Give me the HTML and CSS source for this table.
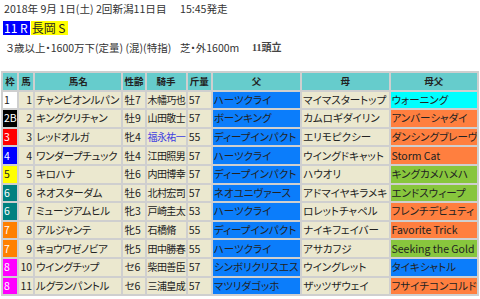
FILE: index.html
```html
<!DOCTYPE html>
<html lang="ja">
<head>
<meta charset="utf-8">
<link rel="stylesheet" href="styles.css">
</head>
<body>
<div class="page">
  <div class="line1"><span class="date">2018年 9月 1日(土) 2回新潟11日目</span><span class="time">15:45発走</span></div>
  <div class="line2"><span class="rno">11 R</span><span class="rname">長岡 S</span></div>
  <div class="line3"><span class="cond">３歳以上・1600万下(定量) (混)(特指)</span><span class="course">芝・外1600m</span><span class="heads">11頭立</span></div>
  <table class="tbl">
    <colgroup>
      <col class="c-waku"><col class="c-uma"><col class="c-name"><col class="c-sex"><col class="c-jockey"><col class="c-kin"><col class="c-sire"><col class="c-dam"><col class="c-bms">
    </colgroup>
    <thead>
      <tr><th>枠</th><th>馬</th><th>馬名</th><th>性齢</th><th>騎手</th><th>斤量</th><th>父</th><th>母</th><th>母父</th></tr>
    </thead>
    <tbody>
      <tr><td class="w1">1</td><td class="num">1</td><td class="nm">チャンピオンルパン</td><td>牡7</td><td class="jk">木幡巧也</td><td>57</td><td class="blue">ハーツクライ</td><td>マイマスタートップ</td><td class="cyan">ウォーニング</td></tr>
      <tr><td class="w2">2B</td><td class="num">2</td><td class="nm">キングクリチャン</td><td>牡9</td><td class="jk">山田敬士</td><td>57</td><td class="blue">ボーンキング</td><td>カムロギダイリン</td><td class="orange">アンバーシャダイ</td></tr>
      <tr><td class="w3">3</td><td class="num">3</td><td class="nm">レッドオルガ</td><td>牝4</td><td class="jk link">福永祐一</td><td>55</td><td class="blue">ディープインパクト</td><td>エリモピクシー</td><td class="orange">ダンシングブレーヴ</td></tr>
      <tr><td class="w4">4</td><td class="num">4</td><td class="nm">ワンダープチュック</td><td>牡4</td><td class="jk">江田照男</td><td>57</td><td class="blue">ハーツクライ</td><td>ウイングドキャット</td><td class="orange">Storm Cat</td></tr>
      <tr><td class="w5">5</td><td class="num">5</td><td class="nm">キロハナ</td><td>牡6</td><td class="jk">内田博幸</td><td>57</td><td class="blue">ディープインパクト</td><td>ハウオリ</td><td class="green">キングカメハメハ</td></tr>
      <tr><td class="w6">6</td><td class="num">6</td><td class="nm">ネオスターダム</td><td>牡6</td><td class="jk">北村宏司</td><td>57</td><td class="blue">ネオユニヴァース</td><td>アドマイヤキラメキ</td><td class="green">エンドスウィープ</td></tr>
      <tr><td class="w6">6</td><td class="num">7</td><td class="nm">ミュージアムヒル</td><td>牝3</td><td class="jk">戸崎圭太</td><td>53</td><td class="blue">ハーツクライ</td><td>ロレットチャペル</td><td class="orange">フレンチデピュティ</td></tr>
      <tr><td class="w7">7</td><td class="num">8</td><td class="nm">アルジャンテ</td><td>牝5</td><td class="jk">石橋脩</td><td>55</td><td class="blue">ディープインパクト</td><td>ナイキフェイバー</td><td class="orange">Favorite Trick</td></tr>
      <tr><td class="w7">7</td><td class="num">9</td><td class="nm">キョウワゼノビア</td><td>牝5</td><td class="jk">田中勝春</td><td>55</td><td class="blue">ハーツクライ</td><td>アサカフジ</td><td class="green">Seeking the Gold</td></tr>
      <tr><td class="w8">8</td><td class="num">10</td><td class="nm">ウイングチップ</td><td>セ6</td><td class="jk">柴田善臣</td><td>57</td><td class="blue">シンボリクリスエス</td><td>ウイングレット</td><td class="blue">タイキシャトル</td></tr>
      <tr><td class="w8">8</td><td class="num">11</td><td class="nm">ルグランパントル</td><td>セ6</td><td class="jk">三浦皇成</td><td>57</td><td class="blue">マツリダゴッホ</td><td>ザッツザウェイ</td><td class="orange">フサイチコンコルド</td></tr>
    </tbody>
  </table>
</div>
</body>
</html>
```
FILE: styles.css
```css
html, body {
  margin: 0;
  padding: 0;
  background: #ffffff;
}
body {
  font-family: "Noto Sans CJK JP", sans-serif;
  font-feature-settings: "palt" 1;
  color: #222;
}
.page {
  padding: 2px 0 0 1px;
}
.line1 {
  font-size: 10.6px;
  line-height: 14px;
  padding-left: 3px;
  color: #333;
  display: flex;
  font-feature-settings: normal;
  white-space: nowrap;
}
.line1 .date {
  flex: 0 0 176px;
}
.line2 {
  margin-top: 5px;
  padding-left: 2px;
  display: flex;
  font-size: 12px;
  line-height: 14px;
}
.rno {
  background: #0000ff;
  color: #ffffff;
  padding: 0 2px 0 1px;
  margin-right: 1px;
}
.rname {
  background: #ffff00;
  color: #222;
  padding: 0 3px 0 1px;
}
.line3 {
  margin-top: 6px;
  padding-left: 5px;
  font-size: 10.5px;
  line-height: 14px;
  color: #333;
  display: flex;
  white-space: nowrap;
}
.line3 .cond {
  flex: 0 0 174px;
}
.line3 .course {
  flex: 0 0 72px;
}
.line3 .heads {
  font-family: "Liberation Serif", "Noto Sans CJK JP", serif;
  font-weight: bold;
  color: #444;
  font-size: 10px;
}
.tbl {
  margin-top: 16px;
  border-collapse: separate;
  border-spacing: 2px;
  background: #cfcfcf;
  table-layout: fixed;
  width: 478px;
  font-size: 10.5px;
}
.c-waku { width: 14px; }
.c-uma { width: 14px; }
.c-name { width: 86px; }
.c-sex { width: 21px; }
.c-jockey { width: 39px; }
.c-kin { width: 23px; }
.c-sire { width: 87px; }
.c-dam { width: 86px; }
.c-bms { width: 86px; }
.tbl th, .tbl td {
  padding: 0 1px;
  height: 16.6px;
  line-height: 14px;
  white-space: nowrap;
  overflow: hidden;
  text-align: left;
  box-sizing: border-box;
}
.tbl th {
  background: #66cccc;
  font-size: 9.5px;
  font-weight: bold;
  text-align: center;
  color: #222;
}
.tbl td {
  background: #ebe8cf;
}
.tbl td.num {
  text-align: right;
}
.tbl td.nm {
  letter-spacing: -0.3px;
}
.tbl td.jk {
  font-size: 10px;
  letter-spacing: -0.6px;
}
.tbl td.link {
  color: #3f3fe0;
}
.tbl td.blue { background: #0b7dfb; }
.tbl td.cyan { background: #00ffff; }
.tbl td.orange { background: #ff7f3f; }
.tbl td.green { background: #88c63d; }
.tbl td.w1 { background: #ffffff; color: #222; }
.tbl td.w2 { background: #000000; color: #ffffff; }
.tbl td.w3 { background: #ff0000; color: #ffffff; }
.tbl td.w4 { background: #0000ff; color: #ffffff; }
.tbl td.w5 { background: #ffff00; color: #222; }
.tbl td.w6 { background: #008080; color: #ffffff; }
.tbl td.w7 { background: #ff8000; color: #ffffff; }
.tbl td.w8 { background: #ff00ff; color: #ffffff; }
```
